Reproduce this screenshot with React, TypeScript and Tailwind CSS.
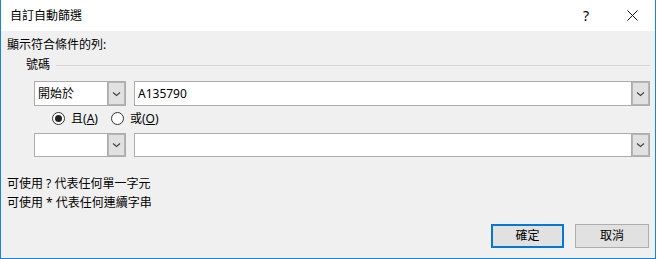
import React from 'react';

const FONT = "font-['Noto_Sans','Noto_Sans_CJK_TC',sans-serif]";

const Chevron = () => (
  <svg width="9" height="6" viewBox="0 0 9 6" className="text-[#404040]">
    <path d="M1 1.5 L4.5 4.5 L8 1.5" fill="none" stroke="currentColor" strokeWidth="1.1" />
  </svg>
);

const Combo = ({ value, className }: { value?: string; className: string }) => (
  <div className={`flex border border-[#acacac] bg-white ${className}`}>
    <div className="flex-1 flex items-center pl-[3px] text-[12px] text-black">{value}</div>
    <div className="w-[18px] flex items-center justify-center bg-[#e1e1e1] border-l border-[#acacac] shadow-[inset_0_0_0_1px_#b5b5b5]">
      <Chevron />
    </div>
  </div>
);

const Radio = ({ checked, label, hot }: { checked: boolean; label: string; hot: string }) => (
  <div className="flex items-center gap-[6px]">
    <div className="w-[13px] h-[13px] rounded-full border border-[#333] bg-white flex items-center justify-center">
      {checked && <div className="w-[7px] h-[7px] rounded-full bg-[#222]" />}
    </div>
    <span className="text-[12px] text-black leading-none">
      {label}(<span className="underline">{hot}</span>)
    </span>
  </div>
);

export default function App() {
  return (
    <div className={`w-[657px] h-[259px] bg-white ${FONT}`}>
      <div className="w-[656px] h-[259px] flex flex-col border-l border-r border-b border-[#1883d7]">
        {/* Title bar */}
        <div className="h-[31px] bg-white flex items-center">
          <span className="pl-[9px] text-[12px] text-black flex-1">自訂自動篩選</span>
          <div className="w-[46px] h-full flex items-center justify-center text-[14px] text-black">?</div>
          <div className="w-[46px] h-full flex items-center justify-center">
            <svg width="11" height="11" viewBox="0 0 11 11">
              <path d="M0.5 0.5 L10.5 10.5 M10.5 0.5 L0.5 10.5" stroke="#111" strokeWidth="1" />
            </svg>
          </div>
        </div>

        {/* Body */}
        <div className="flex-1 bg-[#f0f0f0] pl-[6px] pr-[5px] flex flex-col text-black">
          <div className="h-[16px] mt-[6px] text-[12px] leading-[16px]">顯示符合條件的列:</div>

          <div className="h-[16px] mt-[4px] pl-[19px] flex items-center gap-[6px]">
            <span className="text-[12px] leading-[16px]">號碼</span>
            <div className="flex-1 h-px bg-[#d8d8d8]" />
          </div>

          <div className="h-[25px] mt-[8px] ml-[27px] flex gap-[8px]">
            <Combo value="開始於" className="w-[92px]" />
            <Combo value="A135790" className="flex-1" />
          </div>

          <div className="h-[17px] mt-[4px] ml-[45px] flex items-center gap-[13px]">
            <Radio checked label="且" hot="A" />
            <Radio checked={false} label="或" hot="O" />
          </div>

          <div className="h-[24px] mt-[6px] ml-[27px] flex gap-[8px]">
            <Combo className="w-[92px]" />
            <Combo className="flex-1" />
          </div>

          <div className="h-[16px] mt-[19px] text-[12px] leading-[16px]">可使用 ? 代表任何單一字元</div>
          <div className="h-[16px] mt-[3px] text-[12px] leading-[16px]">可使用 * 代表任何連續字串</div>

          <div className="mt-[13px] mr-[1px] flex justify-end gap-[11px]">
            <button className="w-[73px] h-[24px] bg-[#e1e1e1] border-2 border-[#0078d7] text-[12px] text-black">確定</button>
            <button className="w-[74px] h-[24px] bg-[#e1e1e1] border border-[#adadad] text-[12px] text-black">取消</button>
          </div>
        </div>
      </div>
    </div>
  );
}
